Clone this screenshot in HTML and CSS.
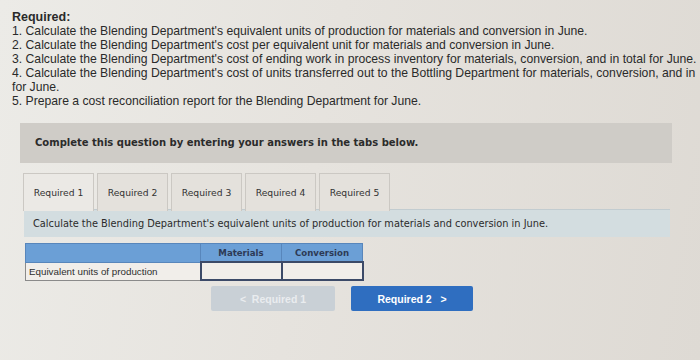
FILE: index.html
```html
<!DOCTYPE html>
<html lang="en">
<head>
    <meta charset="UTF-8">
    <meta name="viewport" content="width=device-width, initial-scale=1.0">
    <title>Blending Department</title>
    <link rel="stylesheet" href="styles.css">
</head>
<body>
    <div class="required">
        <div class="required-title">Required:</div>
        <div>1. Calculate the Blending Department's equivalent units of production for materials and conversion in June.</div>
        <div>2. Calculate the Blending Department's cost per equivalent unit for materials and conversion in June.</div>
        <div>3. Calculate the Blending Department's cost of ending work in process inventory for materials, conversion, and in total for June.</div>
        <div>4. Calculate the Blending Department's cost of units transferred out to the Bottling Department for materials, conversion, and in<br>for June.</div>
        <div>5. Prepare a cost reconciliation report for the Blending Department for June.</div>
    </div>

    <div class="question">
        <div class="banner">Complete this question by entering your answers in the tabs below.</div>

        <div class="tabs">
            <div class="tab active">Required 1</div>
            <div class="tab">Required 2</div>
            <div class="tab">Required 3</div>
            <div class="tab">Required 4</div>
            <div class="tab">Required 5</div>
        </div>

        <div class="instruction">Calculate the Blending Department's equivalent units of production for materials and conversion in June.</div>

        <table class="answer">
            <thead>
                <tr>
                    <th class="label-col"></th>
                    <th>Materials</th>
                    <th>Conversion</th>
                </tr>
            </thead>
            <tbody>
                <tr>
                    <td class="label-col">Equivalent units of production</td>
                    <td class="cell"><input type="text"></td>
                    <td class="cell"><input type="text"></td>
                </tr>
            </tbody>
        </table>

        <div class="nav">
            <button class="btn prev" disabled>&lt;&nbsp;&nbsp;Required 1</button>
            <button class="btn next">Required 2&nbsp;&nbsp;&nbsp;&gt;</button>
        </div>
    </div>
</body>
</html>
```

FILE: styles.css
```css
body {
    margin: 0;
    height: 360px;
    overflow: hidden;
    background: linear-gradient(100deg, #ecebe7 0%, #e6e3de 45%, #dedad4 100%);
    color: #2a2a2a;
}

.required {
    font-family: "Liberation Sans", Arial, sans-serif;
    font-size: 12.2px;
    line-height: 14px;
    white-space: nowrap;
    padding: 10px 0 0 12px;
}

.required-title {
    font-weight: bold;
    font-size: 12.5px;
}

.question {
    margin: 15px 0 0 20px;
    width: 652px;
    font-family: "DejaVu Sans", Verdana, sans-serif;
}

.banner {
    background-color: #cfccc7;
    height: 40px;
    line-height: 40px;
    padding-left: 15px;
    font-size: 10px;
    font-weight: bold;
    color: #2b2b2b;
}

.tabs {
    display: flex;
    gap: 3px;
    margin: 10px 0 0 3px;
}

.tab {
    width: 69px;
    height: 37px;
    line-height: 37px;
    text-align: center;
    font-size: 9.2px;
    color: #333;
    background-color: #e4e1dc;
    border: 1px solid #cbc8c3;
    border-bottom: none;
}

.tab.active {
    background-color: #ebe9e5;
}

.instruction {
    margin: -2px 2px 0 4px;
    height: 27px;
    line-height: 28px;
    padding-left: 9px;
    background-color: #d3dde0;
    border-top: 1px solid #c2ccd0;
    font-size: 9.8px;
    color: #2b2b2b;
}

.answer {
    margin: 6px 0 0 5px;
    border-collapse: collapse;
}

.answer th {
    background-color: #6b9fd6;
    height: 17px;
    padding: 0;
    font-size: 8.6px;
    font-weight: bold;
    color: #2d3a55;
    border: 1px solid #5886bb;
    width: 80px;
}

.answer th.label-col {
    width: 174px;
}

.answer td {
    height: 16px;
    padding: 0;
    border: 1px solid #8a8a8a;
    background-color: #f1eeea;
}

.answer td.label-col {
    font-family: "Liberation Sans", Arial, sans-serif;
    font-size: 9.8px;
    padding-left: 3px;
    color: #2e2e2e;
}

.answer td.cell {
    border: 2px solid #3c4a68;
}

.answer input {
    width: 100%;
    height: 14px;
    border: none;
    background: transparent;
    box-sizing: border-box;
    display: block;
}

.nav {
    display: flex;
    gap: 16px;
    margin: 5px 0 0 191px;
}

.btn {
    width: 124px;
    height: 25px;
    border: none;
    border-radius: 2px;
    font-family: "Liberation Sans", Arial, sans-serif;
    font-size: 10.5px;
    font-weight: bold;
    padding: 0;
}

.btn.prev {
    background-color: #c9d0d6;
    color: #e9ecef;
}

.btn.next {
    width: 122px;
    background-color: #2f6ec0;
    color: #ffffff;
}
```
